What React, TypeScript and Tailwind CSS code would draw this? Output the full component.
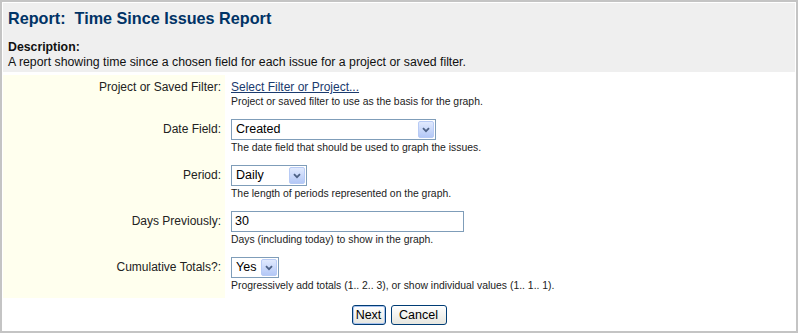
import React from 'react';

function Arrow() {
  return (
    <span className="ml-auto mr-[1px] flex h-[17px] w-[16px] items-center justify-center rounded-[2px] border border-[#b8cbf5] bg-gradient-to-b from-[#e1eafe] to-[#b4c8f6]">
      <svg width="8" height="6" viewBox="0 0 8 6">
        <path d="M1 1.2 L4 4.2 L7 1.2" fill="none" stroke="#4d6185" strokeWidth="1.8" />
      </svg>
    </span>
  );
}

function FakeSelect({ value, width }: { value: string; width: string }) {
  return (
    <div className={`flex h-[21px] ${width} items-center border border-[#7f9db9] bg-white pl-[4px] text-[12.5px] text-black`}>
      <span>{value}</span>
      <Arrow />
    </div>
  );
}

function Row({ label, children, desc, first }: { label: string; children: React.ReactNode; desc: string; first?: boolean }) {
  return (
    <>
      <div className={`bg-[#ffffee] pr-[4px] pt-[5px] text-right text-[12px] text-[#222] ${first ? 'leading-[14px]' : 'leading-[21px]'}`}>
        {label}
      </div>
      <div className="pb-[5px] pl-[6px] pt-[5px]">
        {children}
        <div className="mt-[1px] text-[10.4px] leading-[14px] text-[#222]">{desc}</div>
      </div>
    </>
  );
}

export default function App() {
  return (
    <div className="h-[335px] w-[799px] bg-white font-['Liberation_Sans',Arial,sans-serif]">
      <div className="flex h-[333px] w-[798px] flex-col border-2 border-[#c4c4c4] p-px">
        <div className="h-[69px] bg-[#efefef] pl-[5px] pt-[6px]">
          <h1 className="text-[16.2px] font-bold leading-[18px] text-[#003366]">Report:&nbsp; Time Since Issues Report</h1>
          <div className="mt-[13px] text-[12.3px] font-bold leading-[15px] text-[#111]">Description:</div>
          <div className="text-[12.3px] leading-[15px] text-[#111]">
            A report showing time since a chosen field for each issue for a project or saved filter.
          </div>
        </div>

        <div className="mt-[3px] grid grid-cols-[222px_1fr]">
          <Row first label="Project or Saved Filter:" desc="Project or saved filter to use as the basis for the graph.">
            <a href="#" className="block text-[12px] leading-[14px] text-[#1a3a6e] underline">
              Select Filter or Project...
            </a>
          </Row>
          <Row label="Date Field:" desc="The date field that should be used to graph the issues.">
            <FakeSelect value="Created" width="w-[205px]" />
          </Row>
          <Row label="Period:" desc="The length of periods represented on the graph.">
            <FakeSelect value="Daily" width="w-[76px]" />
          </Row>
          <Row label="Days Previously:" desc="Days (including today) to show in the graph.">
            <div className="flex h-[21px] w-[233px] items-center border border-[#7f9db9] bg-white pl-[3px] text-[12.5px] text-black">
              30
            </div>
          </Row>
          <Row label="Cumulative Totals?:" desc="Progressively add totals (1.. 2.. 3), or show individual values (1.. 1.. 1).">
            <FakeSelect value="Yes" width="w-[48px]" />
          </Row>
        </div>

        <div className="mt-[7px] flex justify-center gap-[5px]">
          <button className="flex h-[20px] w-[34px] items-center justify-center rounded-[3px] border border-[#003c74] bg-gradient-to-b from-white to-[#e6e6df] text-[12.5px] text-black shadow-[inset_0_0_0_1px_#a8c2ee]">
            Next
          </button>
          <button className="flex h-[20px] w-[56px] items-center justify-center rounded-[3px] border border-[#003c74] bg-gradient-to-b from-white to-[#e6e6df] text-[12.5px] text-black">
            Cancel
          </button>
        </div>
      </div>
    </div>
  );
}
